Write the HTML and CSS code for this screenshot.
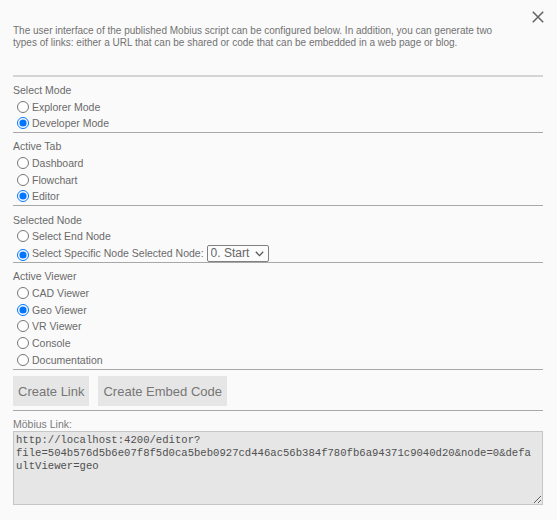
FILE: index.html
```html
<!DOCTYPE html>
<html>
<head>
<meta charset="utf-8">
<link rel="stylesheet" href="styles.css">
</head>
<body>
<div class="dialog">
  <button class="close" aria-label="Close">
    <svg width="12" height="12" viewBox="0 0 12 12"><path d="M0.8 0.8 L11.2 11.2 M11.2 0.8 L0.8 11.2" stroke="#666" stroke-width="1.6" fill="none"/></svg>
  </button>
  <p class="intro">The user interface of the published Mobius script can be configured below. In addition, you can generate two types of links: either a URL that can be shared or code that can be embedded in a web page or blog.</p>
  <div class="rule-top"></div>

  <div class="section first">
    <div class="row label">Select Mode</div>
    <label class="row"><input type="radio" name="mode" class="radio">Explorer Mode</label>
    <label class="row"><input type="radio" name="mode" class="radio" checked>Developer Mode</label>
  </div>

  <div class="section">
    <div class="row label">Active Tab</div>
    <label class="row"><input type="radio" name="tab" class="radio">Dashboard</label>
    <label class="row"><input type="radio" name="tab" class="radio">Flowchart</label>
    <label class="row"><input type="radio" name="tab" class="radio" checked>Editor</label>
  </div>

  <div class="section">
    <div class="row label">Selected Node</div>
    <label class="row"><input type="radio" name="node" class="radio">Select End Node</label>
    <label class="row"><input type="radio" name="node" class="radio low" checked>Select Specific Node Selected Node:
      <span class="select-wrap">
        <select class="node-select"><option>0. Start</option></select>
        <svg class="chevron" width="9" height="6" viewBox="0 0 9 6"><path d="M0.8 0.8 L4.5 4.6 L8.2 0.8" stroke="#555" stroke-width="1.3" fill="none"/></svg>
      </span>
    </label>
  </div>

  <div class="section">
    <div class="row label">Active Viewer</div>
    <label class="row"><input type="radio" name="viewer" class="radio">CAD Viewer</label>
    <label class="row"><input type="radio" name="viewer" class="radio" checked>Geo Viewer</label>
    <label class="row"><input type="radio" name="viewer" class="radio">VR Viewer</label>
    <label class="row"><input type="radio" name="viewer" class="radio">Console</label>
    <label class="row"><input type="radio" name="viewer" class="radio">Documentation</label>
  </div>

  <div class="actions">
    <button class="btn">Create Link</button>
    <button class="btn">Create Embed Code</button>
  </div>

  <div class="link-block">
    <div class="link-label">Möbius Link:</div>
    <textarea class="link-text">http://localhost:4200/editor?file=504b576d5b6e07f8f5d0ca5beb0927cd446ac56b384f780fb6a94371c9040d20&amp;node=0&amp;defaultViewer=geo</textarea>
  </div>
</div>
</body>
</html>
```

FILE: styles.css
```css
html, body {
  margin: 0;
  padding: 0;
  background: #fafafa;
}

body {
  font-family: "Liberation Sans", Arial, sans-serif;
  color: #707070;
  width: 557px;
  height: 520px;
  overflow: hidden;
}

.dialog {
  position: relative;
  padding: 0 14px 0 13px;
}

.close {
  position: absolute;
  top: 11px;
  right: 13px;
  width: 12px;
  height: 12px;
  padding: 0;
  border: none;
  background: none;
  display: block;
}

.close svg {
  display: block;
}

.intro {
  margin: 0;
  padding-top: 25px;
  width: 500px;
  font-size: 10px;
  line-height: 12px;
  color: #727272;
}

.rule-top {
  height: 2px;
  background: #d4d4d4;
  margin-top: 26px;
}

.section {
  padding: 5px 0 0.5px;
  border-bottom: 1px solid #a8a8a8;
}

.section.first {
  padding-top: 4.5px;
}

.row {
  display: flex;
  align-items: center;
  height: 16.7px;
  font-size: 10.5px;
  color: #6a6a6a;
  white-space: nowrap;
}

.radio {
  width: 12px;
  height: 12px;
  margin: 0 3px 0 4px;
  flex: none;
}

.radio.low {
  margin-top: 4px;
}

.select-wrap {
  position: relative;
  display: inline-flex;
  margin-left: 3px;
}

.node-select {
  appearance: none;
  -webkit-appearance: none;
  width: 62px;
  height: 17px;
  box-sizing: border-box;
  border: 1px solid #808080;
  border-radius: 2px;
  background: #fcfcfc;
  font-family: "Liberation Sans", Arial, sans-serif;
  font-size: 12px;
  color: #666;
  padding: 0 0 0 3px;
  line-height: 15px;
}

.chevron {
  position: absolute;
  right: 5px;
  top: 6px;
}

.actions {
  display: flex;
  gap: 9px;
  padding: 6.5px 0 4px;
  border-bottom: 1px solid #a8a8a8;
}

.btn {
  height: 30px;
  padding: 0 5px;
  border: none;
  border-radius: 0;
  background: #e6e6e6;
  color: #767676;
  font-family: "Liberation Sans", Arial, sans-serif;
  font-size: 13px;
}

.link-block {
  padding-top: 7px;
}

.link-label {
  font-size: 10.5px;
  line-height: 13px;
  color: #7a7a7a;
}

.link-text {
  display: block;
  box-sizing: border-box;
  width: 530px;
  height: 74px;
  margin: 0;
  padding: 2px 6px 2px 2px;
  border: 1px solid #c6c6c6;
  border-radius: 0;
  background: #e6e6e6;
  color: #505050;
  font-family: "Liberation Mono", "DejaVu Sans Mono", monospace;
  font-size: 10.6px;
  line-height: 13px;
  outline: none;
}
```
